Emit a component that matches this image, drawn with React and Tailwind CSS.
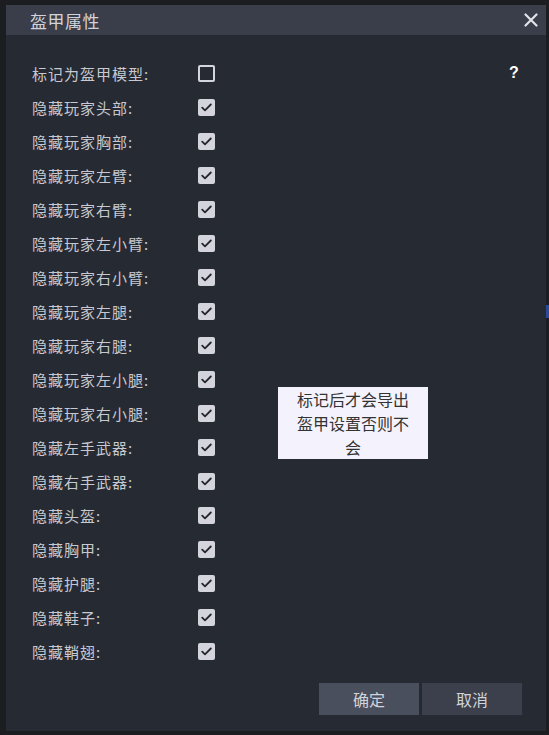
import React from "react";

const labels = [
  ["标记为盔甲模型:", false],
  ["隐藏玩家头部:", true],
  ["隐藏玩家胸部:", true],
  ["隐藏玩家左臂:", true],
  ["隐藏玩家右臂:", true],
  ["隐藏玩家左小臂:", true],
  ["隐藏玩家右小臂:", true],
  ["隐藏玩家左腿:", true],
  ["隐藏玩家右腿:", true],
  ["隐藏玩家左小腿:", true],
  ["隐藏玩家右小腿:", true],
  ["隐藏左手武器:", true],
  ["隐藏右手武器:", true],
  ["隐藏头盔:", true],
  ["隐藏胸甲:", true],
  ["隐藏护腿:", true],
  ["隐藏鞋子:", true],
  ["隐藏鞘翅:", true],
];

function Box({ checked }) {
  if (!checked)
    return <div className="w-[17px] h-[17px] rounded-[2px] border-2 border-[#d4d4dc] bg-transparent" />;
  return (
    <div className="w-[17px] h-[17px] rounded-[2px] bg-[#d4d4dc] flex items-center justify-center">
      <svg width="11" height="9" viewBox="0 0 11 9" fill="none">
        <path d="M1.2 4.6 L4 7.3 L9.8 1.5" stroke="#23262e" strokeWidth="1.8" strokeLinecap="round" strokeLinejoin="round" />
      </svg>
    </div>
  );
}

export default function App() {
  const font = { fontFamily: '"Noto Sans CJK SC", "Noto Sans", sans-serif' };
  return (
    <div className="w-[549px] h-[735px] bg-[#1b1d21] pt-[5px] pl-[6px] overflow-hidden relative" style={font}>
      <div className="absolute right-0 top-[305px] w-[3px] h-[13px] bg-[#2a4a9a]" />
      <div className="w-[540px] h-[726px] bg-[#262a33] flex flex-col relative">
        <div className="h-[30px] bg-[#3a3e4b] flex items-center justify-between pl-[24px] pr-[8px]">
          <span className="text-[17px] tracking-[0.5px] text-[#d2d3da] leading-none">盔甲属性</span>
          <svg width="14" height="14" viewBox="0 0 14 14">
            <path d="M1.5 1.5 L12.5 12.5 M12.5 1.5 L1.5 12.5" stroke="#e2e3e8" strokeWidth="2.2" strokeLinecap="round" />
          </svg>
        </div>
        <div className="flex flex-col pt-[21px] pl-[26px]">
          {labels.map(([t, c]) => (
            <div key={t} className="h-[34px] flex items-center">
              <span className="w-[166px] text-[15px] tracking-[1px] text-[#c8c9d0] leading-none">{t}</span>
              <Box checked={c} />
            </div>
          ))}
        </div>
        <span className="absolute left-[503px] top-[60px] text-[16px] font-bold text-white leading-none" style={{ fontFamily: '"Liberation Sans", sans-serif' }}>?</span>
        <div className="absolute left-[272px] top-[382px] w-[150px] h-[72px] bg-[#f4f2fc] text-[#333] text-[16px] leading-[24px] text-center px-[12px]">
          标记后才会导出盔甲设置否则不会
        </div>
        <div className="absolute left-[313px] top-[678px] flex gap-[3px]">
          <div className="w-[100px] h-[32px] bg-[#4a4f5e] flex items-center justify-center text-[16px] text-[#d2d3da]">确定</div>
          <div className="w-[100px] h-[32px] bg-[#3c404c] flex items-center justify-center text-[16px] text-[#d2d3da]">取消</div>
        </div>
      </div>
    </div>
  );
}
